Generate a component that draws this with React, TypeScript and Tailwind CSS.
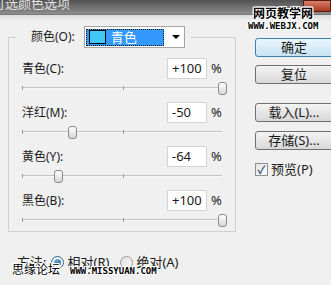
import React from "react";

const sliders = [
  { label: "青色(C):", value: 100 },
  { label: "洋红(M):", value: -50 },
  { label: "黄色(Y):", value: -64 },
  { label: "黑色(B):", value: 100 },
];

const outline = "[text-shadow:1px_0_#fff,-1px_0_#fff,0_1px_#fff,0_-1px_#fff,1px_1px_#fff,-1px_-1px_#fff,1px_-1px_#fff,-1px_1px_#fff]";

function SliderRow({ label, value }: { label: string; value: number }) {
  const text = value > 0 ? `+${value}` : `${value}`;
  return (
    <div>
      <div className="flex h-[21px] items-center justify-between">
        <span>{label}</span>
        <div className="flex items-center">
          <div className="flex h-[21px] w-[40px] items-center border border-[#d4d4d4] bg-white pl-[4px] text-[13px]">
            {text}
          </div>
          <span className="ml-[4px] w-[11px] text-[13px]">%</span>
        </div>
      </div>
      <div className="relative h-[23px]">
        <div className="absolute left-0 right-0 top-[8px] h-[2px] border-t border-[#c4c4c4] bg-[#f7f7f7]" />
        <div className="absolute left-0 top-[7px] h-[4px] w-px bg-[#9a9a9a]" />
        <div className="absolute left-[101px] top-[7px] h-[4px] w-px bg-[#9a9a9a]" />
        <div
          className="absolute top-[3px] h-[13px] w-[9px] rounded-[3px] border border-[#8a8a8a] bg-gradient-to-b from-[#ffffff] to-[#d6d6d6]"
          style={{ left: 100 + value - 4 }}
        />
      </div>
    </div>
  );
}

function Button({ label, primary }: { label: string; primary?: boolean }) {
  return (
    <div
      className={
        "flex h-[19px] w-[84px] items-center justify-center rounded-[3px] border pr-[6px] " +
        (primary
          ? "border-[#3c7fb1] bg-gradient-to-b from-[#eaf6fd] to-[#c6e2f3]"
          : "border-[#707070] bg-gradient-to-b from-[#f4f4f4] to-[#d8d8d8]")
      }
    >
      {label}
    </div>
  );
}

export default function App() {
  return (
    <div className="relative h-[285px] w-[331px] overflow-hidden bg-[#f0f0f0] text-[12px] leading-none text-[#1a1a1a] [font-family:'Noto_Sans','Noto_Sans_CJK_SC',sans-serif]">
      {/* title bar */}
      <div className="h-[15px] overflow-hidden border-b border-[#7a7a7a] bg-gradient-to-b from-[#525252] to-[#8e8e8e]">
        <div className="-ml-[8px] -mt-[4px] flex justify-between">
          <span className="text-[13px] leading-[14px] text-[#e2e2e2] [font-family:'Noto_Sans_CJK_SC',sans-serif]">可选颜色选项</span>
          <div className="mr-0 mt-[4px] h-[12px] w-[28px] rounded-bl-[4px] border border-[#5a1a10] bg-gradient-to-b from-[#d8806a] to-[#a8341e]" />
        </div>
      </div>
      <div className="h-[5px] bg-gradient-to-b from-[#dcdcdc] to-[#ececec]" />

      <div className="flex">
        {/* left side */}
        <div className="ml-[8px] w-[228px] shrink-0">
          <fieldset className="mt-[6px] h-[206px] border border-[#cfcfcf] px-[13px] pt-[10px]">
            <legend className="-ml-[6px] flex items-center pl-[15px] pr-[6px]">
              <span>颜色(O):</span>
              <div className="ml-[9px] flex h-[22px] w-[101px] items-center border border-[#a5a5a5] bg-white pl-[1px]">
                <div className="flex h-[17px] w-[78px] items-center border border-dotted border-[#1a1a1a] bg-[#3399ff] pl-[2px]">
                  <div className="h-[14px] w-[17px] border border-black bg-[#3fc8f8]" />
                  <span className="ml-[5px] text-[13px] text-white">青色</span>
                </div>
                <div className="ml-[8px] h-0 w-0 border-x-[4px] border-t-[4px] border-x-transparent border-t-black" />
              </div>
            </legend>
            {sliders.map((s) => (
              <SliderRow key={s.label} label={s.label} value={s.value} />
            ))}
          </fieldset>
          <div className="ml-[9px] mt-[22px] flex h-[16px] items-center text-[13px]">
            <span>方法:</span>
            <div className="ml-[5px] flex h-[13px] w-[13px] items-center justify-center rounded-full border border-[#2c628b] bg-[#f4f4f4]">
              <div className="h-[7px] w-[7px] rounded-full bg-gradient-to-br from-[#7ab8e8] to-[#1d5a8e]" />
            </div>
            <span className="ml-[3px]">相对(R)</span>
            <div className="ml-[11px] h-[13px] w-[13px] rounded-full border border-[#9a9a9a] bg-gradient-to-br from-[#e0e0e0] to-[#fafafa]" />
            <span className="ml-[3px]">绝对(A)</span>
          </div>
        </div>

        {/* right side */}
        <div className="ml-[19px] mt-[18px] flex shrink-0 flex-col text-[13px]">
          <Button label="确定" primary />
          <div className="h-[8px]" />
          <Button label="复位" />
          <div className="h-[19px]" />
          <Button label="载入(L)..." />
          <div className="h-[9px]" />
          <Button label="存储(S)..." />
          <div className="mt-[13px] flex items-center">
            <div className="flex h-[13px] w-[13px] items-center justify-center border border-[#8e8f8f] bg-gradient-to-br from-[#e4e4e4] to-[#fdfdfd] text-[11px] font-bold text-[#3a5a80]">
              ✓
            </div>
            <span className="ml-[3px]">预览(P)</span>
          </div>
        </div>
      </div>

      {/* watermarks */}
      <div className={"absolute left-[253px] top-[7px] text-[12px] font-bold text-black [font-family:'Noto_Sans_CJK_SC',sans-serif] " + outline}>
        网页教学网
      </div>
      <div className={"absolute left-[248px] top-[22px] text-[9px] font-bold text-black [font-family:'DejaVu_Sans_Mono',monospace] " + outline}>
        WWW.WEBJX.COM
      </div>
      <div className={"absolute left-[12px] top-[263px] text-[12px] text-black [font-family:'Noto_Sans_CJK_SC',sans-serif] " + outline}>
        思缘论坛
      </div>
      <div className={"absolute left-[70px] top-[267px] text-[9px] font-bold text-black [font-family:'DejaVu_Sans_Mono',monospace] " + outline}>
        WWW.MISSYUAN.COM
      </div>
    </div>
  );
}
